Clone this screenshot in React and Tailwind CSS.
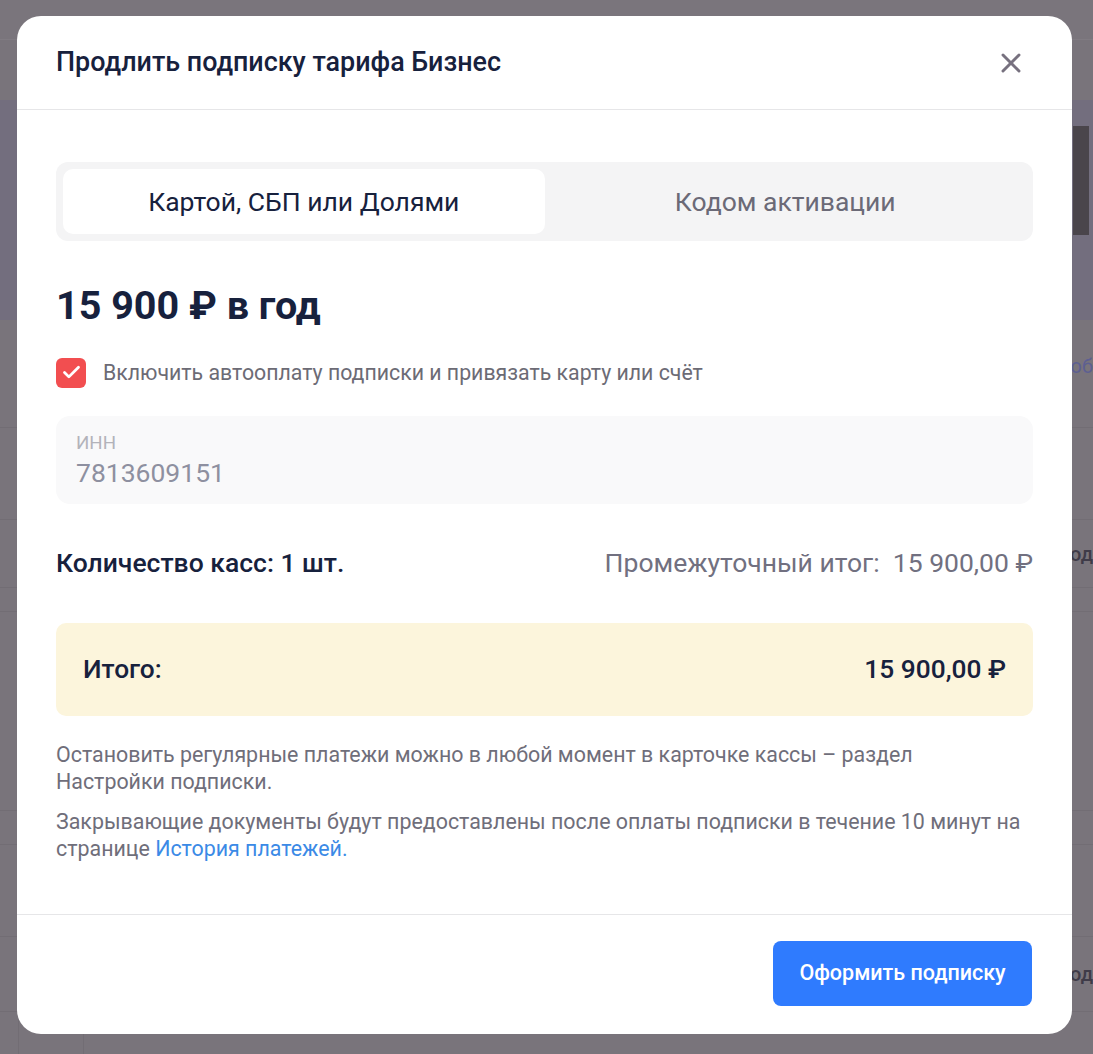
import { X, Check } from 'lucide-react';

const font = { fontFamily: 'Roboto, "Noto Sans", sans-serif' };

// Dimmed page that sits under the dialog; only its right strip shows
const Backdrop = () => (
  <div className="flex h-[1054px] flex-col overflow-hidden bg-[#79747b]">
    <div className="h-[40px] shrink-0 border-b border-[#807b82] bg-[#7a757c]" />
    <div className="h-[60px] shrink-0" />
    <div className="flex h-[220px] shrink-0 flex-col bg-[#736e7e]">
      <div className="ml-auto mr-[4px] mt-[26px] h-[109px] w-[16px] bg-[#4a454b]" />
    </div>
    <div className="flex h-[108px] shrink-0 items-center justify-end border-b border-[#726d74] pb-[16px] text-[20px] text-[#5d5f92]">
      об
    </div>
    <div className="h-[92px] shrink-0 border-b border-[#726d74]" />
    <div className="flex h-[67px] shrink-0 items-center justify-end text-[20px] font-medium text-[#3f3b48]">
      од
    </div>
    <div className="h-[25px] shrink-0 border-y border-[#726d74]" />
    <div className="h-[199px] shrink-0 border-b border-[#726d74]" />
    <div className="h-[34px] shrink-0 border-b border-[#726d74]" />
    <div className="h-[92px] shrink-0 border-b border-[#726d74]" />
    <div className="flex h-[75px] shrink-0 items-center justify-end border-b border-[#726d74] text-[20px] font-medium text-[#3f3b48]">
      од
    </div>
    <div className="flex flex-1">
      <div className="w-[19px] border-r border-[#726d74]" />
      <div className="w-[65px] border-r border-[#726d74]" />
    </div>
  </div>
);

const Tabs = () => (
  <div className="grid h-[79px] grid-cols-2 rounded-[12px] bg-[#f4f4f5] p-[7px]">
    <button className="rounded-[10px] bg-white text-[26.5px] text-[#17213d]">Картой, СБП или Долями</button>
    <button className="text-[26.5px] text-[#6b6a77]">Кодом активации</button>
  </div>
);

export default function App() {
  return (
    <div className="relative" style={font}>
      <Backdrop />

      <div className="absolute left-[17px] top-[16px] flex h-[1018px] w-[1055px] flex-col overflow-hidden rounded-[24px] bg-white">
        <div className="flex h-[94px] shrink-0 items-center justify-between border-b border-[#e6e6e8] pl-[39px] pr-[45px]">
          <h2 className="text-[26.9px] font-medium text-[#17213d]">Продлить подписку тарифа Бизнес</h2>
          <X className="h-[32px] w-[32px] text-[#77717f]" strokeWidth={2.2} />
        </div>

        <div className="flex flex-1 flex-col px-[39px] pt-[52px]">
          <Tabs />

          <div className="mt-[42px] text-[39.5px] font-bold leading-[46px] text-[#17213d]">15 900 ₽ в год</div>

          <label className="mt-[28px] flex items-center gap-[17px]">
            <span className="flex h-[30px] w-[30px] items-center justify-center rounded-[6px] bg-[#f24e50]">
              <Check className="h-[21px] w-[21px] text-white" strokeWidth={3.2} />
            </span>
            <span className="text-[21.3px] text-[#6c6b75]">Включить автооплату подписки и привязать карту или счёт</span>
          </label>

          <div className="mt-[27px] flex h-[88px] flex-col justify-center rounded-[14px] bg-[#f9f9fa] px-[20px]">
            <span className="text-[18.7px] leading-[22px] text-[#b3b3ba]">ИНН</span>
            <span className="mt-[4px] text-[26.5px] leading-[30px] text-[#8e90a0]">7813609151</span>
          </div>

          <div className="mt-[45px] flex items-center justify-between text-[26.5px] leading-[28px]">
            <span className="font-medium text-[#17213d]">Количество касс: 1 шт.</span>
            <span className="whitespace-pre text-[#717080]">Промежуточный итог:  15 900,00 ₽</span>
          </div>

          <div className="mt-[46px] flex h-[93px] items-center justify-between rounded-[10px] bg-[#fcf5dc] px-[27px] text-[26.3px] font-medium text-[#17213d]">
            <span>Итого:</span>
            <span>15 900,00 ₽</span>
          </div>

          <div className="mt-[25px] space-y-[13px] text-[21.4px] leading-[27px] text-[#6f6e7a]">
            <p>
              Остановить регулярные платежи можно в любой момент в карточке кассы – раздел{' '}
              <span className="whitespace-nowrap">Настройки подписки.</span>
            </p>
            <p>
              Закрывающие документы будут предоставлены после оплаты подписки в течение 10 минут на странице{' '}
              <a className="text-[#3b8ae6]">История платежей.</a>
            </p>
          </div>
        </div>

        <div className="flex h-[120px] shrink-0 items-start justify-end border-t border-[#e6e6e8] pr-[40px] pt-[26px]">
          <button className="h-[65px] w-[259px] rounded-[8px] bg-[#2f7bfe] text-[21.5px] font-medium text-white">
            Оформить подписку
          </button>
        </div>
      </div>
    </div>
  );
}
